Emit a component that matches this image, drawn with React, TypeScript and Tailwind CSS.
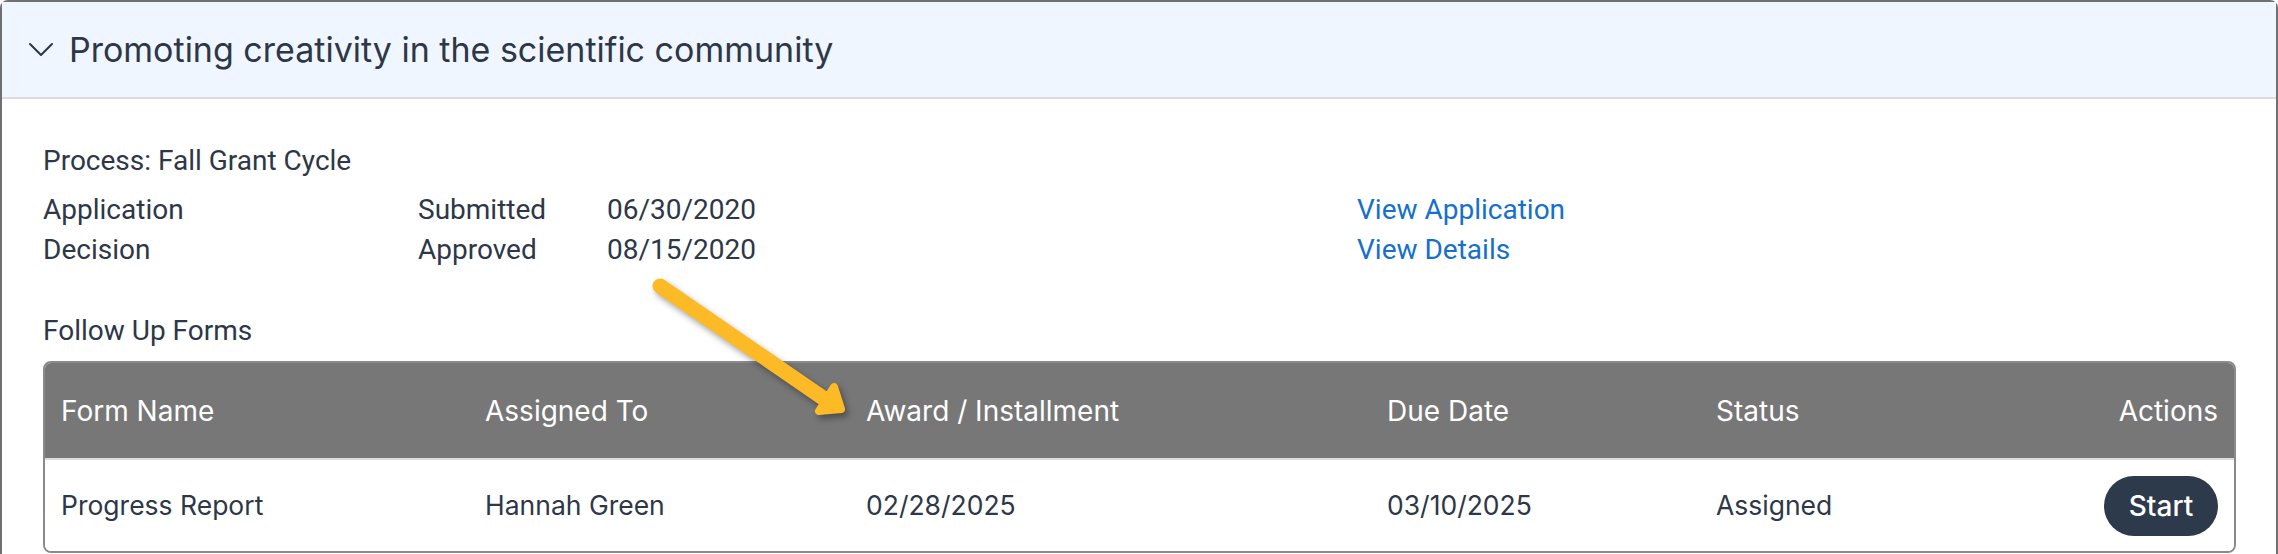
import React from "react";

const roboto = { fontFamily: "Roboto, 'Liberation Sans', sans-serif" };
const pop = { fontFamily: "Inter, 'Noto Sans', sans-serif" };

function Chevron() {
  return (
    <svg width="26" height="16" viewBox="0 0 26 16" className="shrink-0">
      <path d="M2 2 L13 13 L24 2" fill="none" stroke="#2d3748" strokeWidth="2" strokeLinecap="round" strokeLinejoin="round" />
    </svg>
  );
}

function Arrow() {
  return (
    <svg
      width="2278"
      height="554"
      viewBox="0 0 2278 554"
      className="pointer-events-none absolute left-0 top-0"
      style={{ filter: "drop-shadow(3px 4px 3px rgba(0,0,0,0.35))" }}
    >
      <line x1="660" y1="286" x2="826" y2="400" stroke="#fbba26" strokeWidth="15" strokeLinecap="round" />
      <polygon points="841,409 834,387 819,411" fill="#fbba26" stroke="#fbba26" strokeWidth="8" strokeLinejoin="round" />
    </svg>
  );
}

export default function App() {
  const cols = "grid grid-cols-[424px_381px_521px_329px_1fr] items-center";
  return (
    <div className="relative h-[554px] w-[2278px] overflow-hidden bg-white text-[#2d3748]" style={roboto}>
      <div className="rounded-t-[8px] border-2 border-[#707070] pb-20">
        <div className="flex h-[97px] items-center gap-[15px] border-b-2 border-[#dcdcdc] bg-[#eff6ff] pl-[26px]">
          <Chevron />
          <span className="text-[34px] leading-none text-[#2d3748]" style={pop}>
            Promoting creativity in the scientific community
          </span>
        </div>
        <div className="pl-[41px] pr-[40px] pt-[42px]">
          <div className="text-[28px] leading-[40px]">Process: Fall Grant Cycle</div>
          <div className="mt-[9px] grid grid-cols-[375px_189px_750px_1fr] text-[28px] leading-[40px]">
            <div>Application</div>
            <div>Submitted</div>
            <div>06/30/2020</div>
            <div className="text-[#1570cd]">View Application</div>
            <div>Decision</div>
            <div>Approved</div>
            <div>08/15/2020</div>
            <div className="text-[#1570cd]">View Details</div>
          </div>
          <div className="mt-[41px] text-[28px] leading-[40px]">Follow Up Forms</div>
          <div className="mt-[10px] overflow-hidden rounded-[8px] border-2 border-[#8a8a8a]" style={pop}>
            <div className={`${cols} h-[97px] border-b-2 border-[#dcdcdc] bg-[#777777] text-[28px] text-white`}>
              <div className="px-4">Form Name</div>
              <div className="px-4">Assigned To</div>
              <div className="px-4">Award / Installment</div>
              <div className="px-4">Due Date</div>
              <div className="flex justify-between px-4">
                <span>Status</span>
                <span>Actions</span>
              </div>
            </div>
            <div className={`${cols} h-[91px] bg-white text-[26.5px] text-[#2d3748]`}>
              <div className="px-4">Progress Report</div>
              <div className="px-4">Hannah Green</div>
              <div className="px-4">02/28/2025</div>
              <div className="px-4">03/10/2025</div>
              <div className="flex items-center justify-between px-4">
                <span>Assigned</span>
                <button className="flex h-[60px] w-[114px] items-center justify-center rounded-full bg-[#2d3a4b] text-[28px] font-medium text-white">
                  Start
                </button>
              </div>
            </div>
          </div>
        </div>
      </div>
      <Arrow />
    </div>
  );
}
